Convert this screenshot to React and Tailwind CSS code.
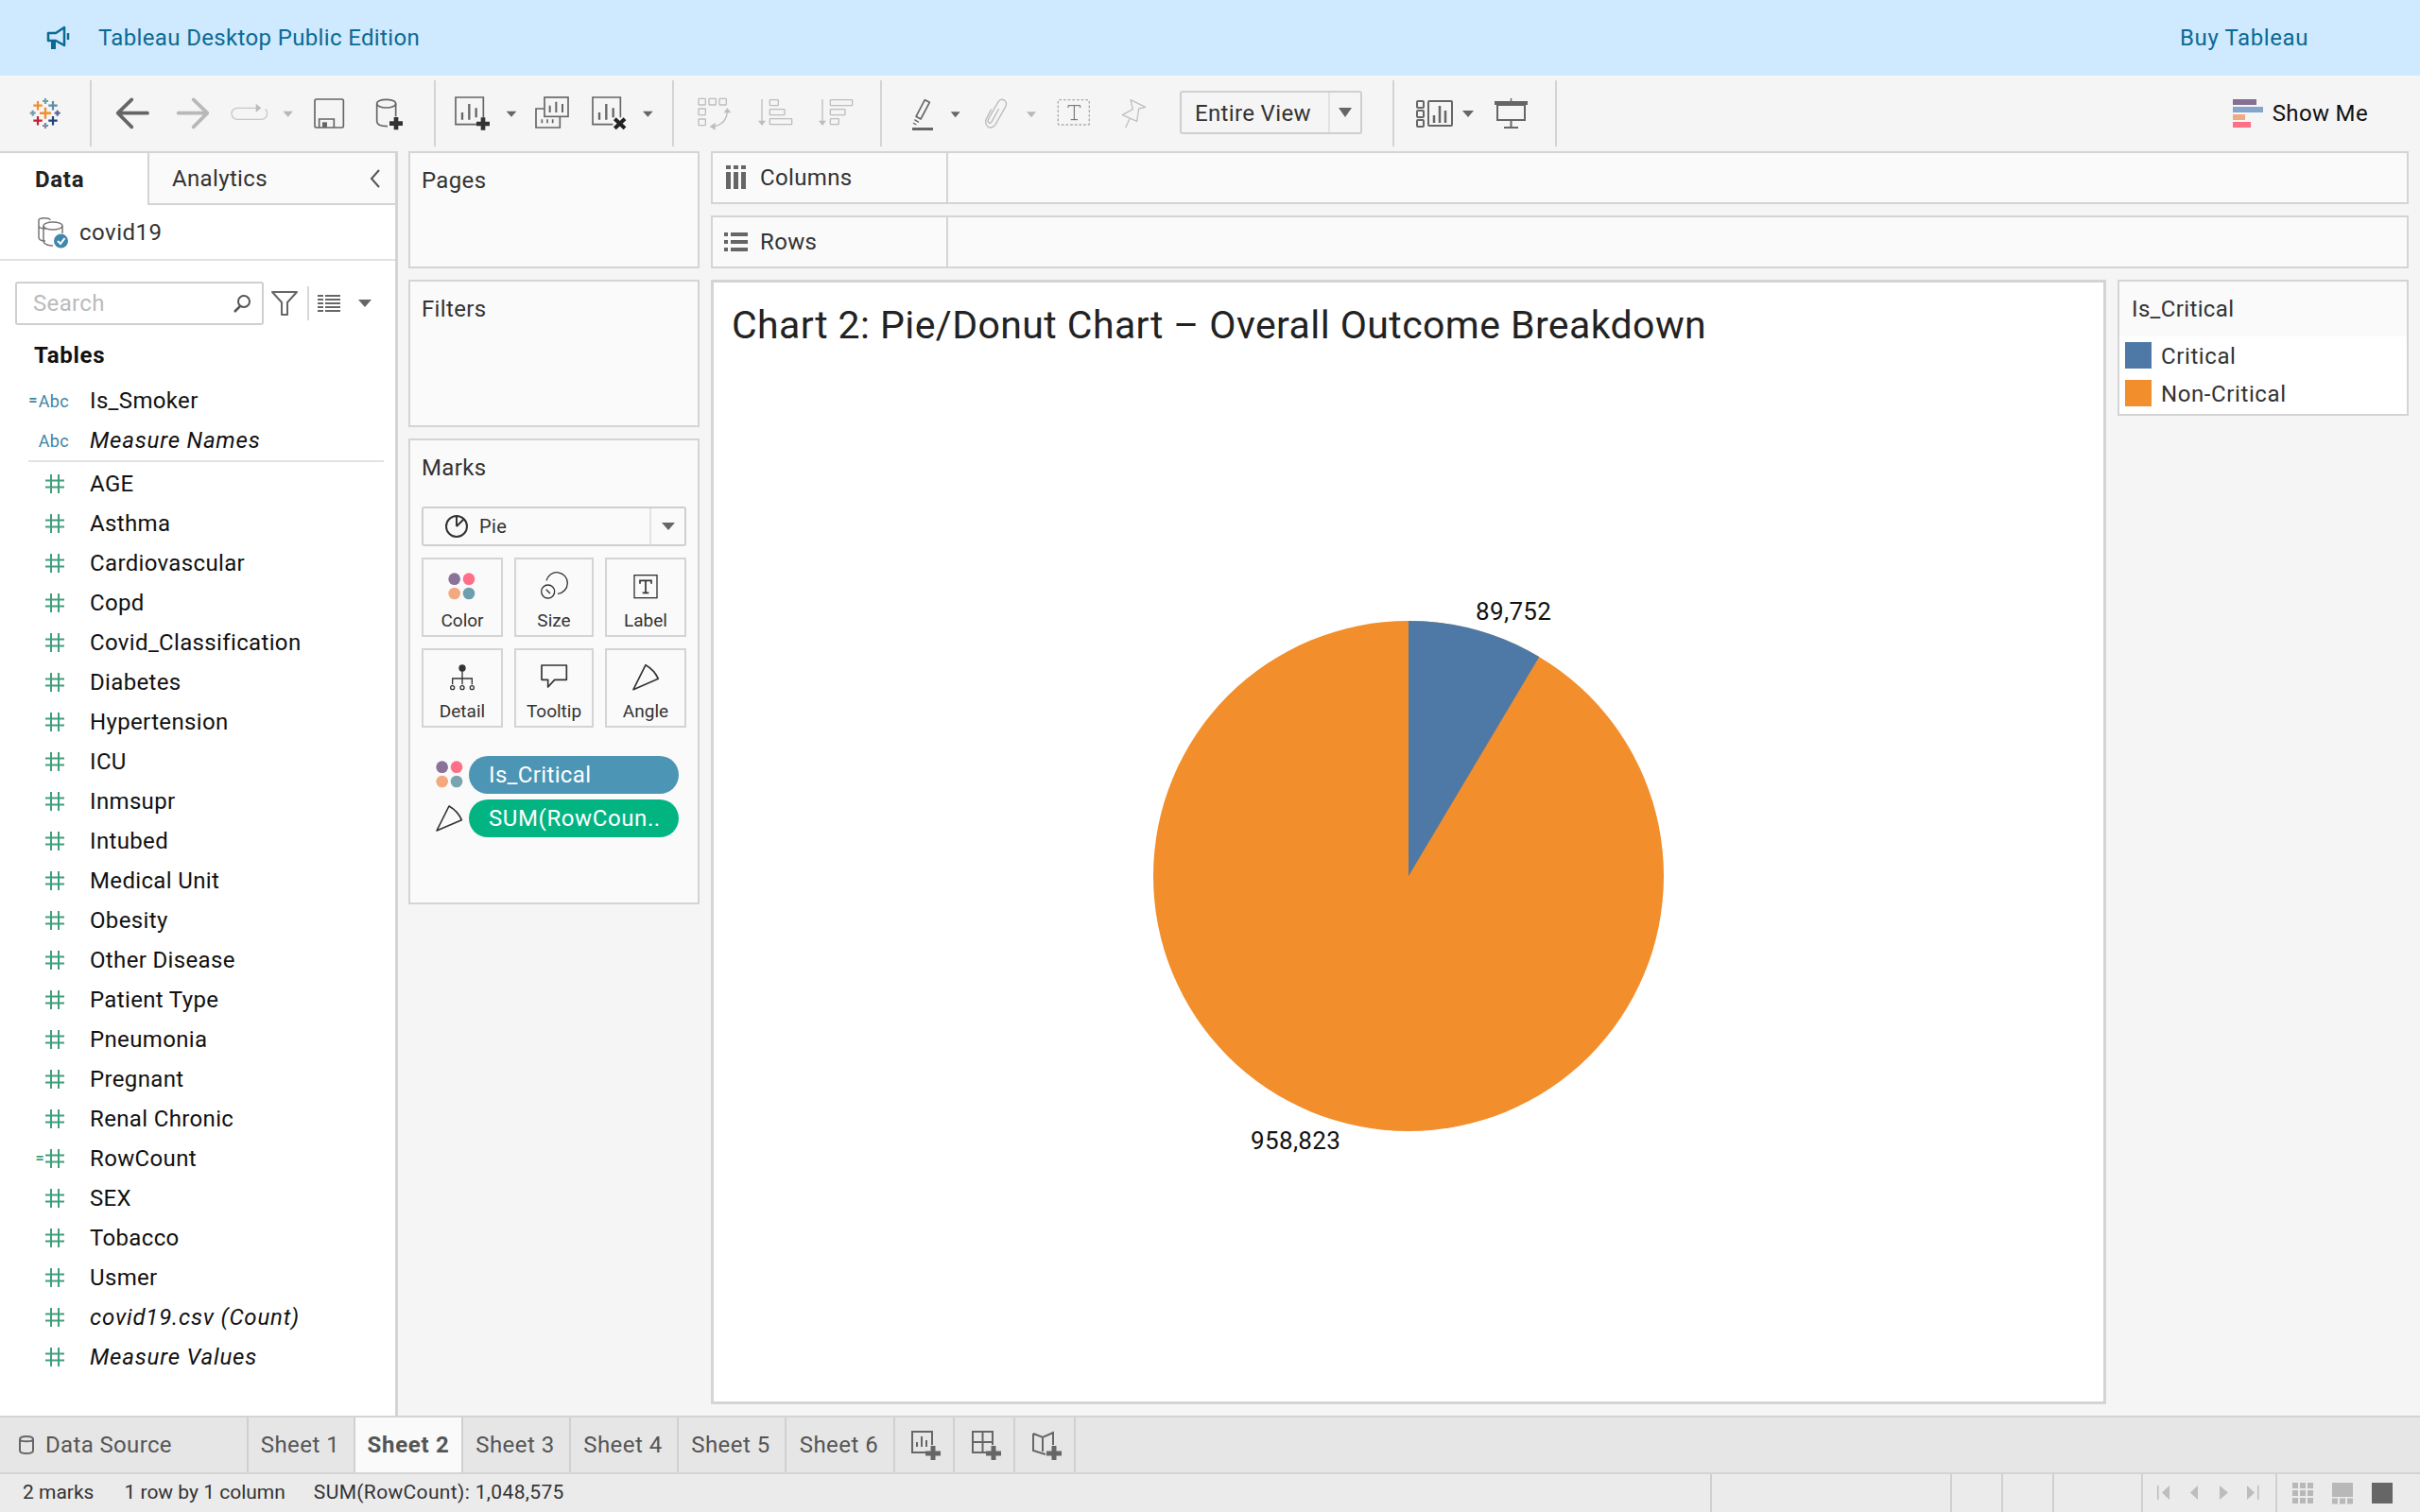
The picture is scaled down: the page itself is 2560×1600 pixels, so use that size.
import React from "react";

const fields = [
  "AGE", "Asthma", "Cardiovascular", "Copd", "Covid_Classification", "Diabetes", "Hypertension", "ICU",
  "Inmsupr", "Intubed", "Medical Unit", "Obesity", "Other Disease", "Patient Type", "Pneumonia", "Pregnant",
  "Renal Chronic", "RowCount", "SEX", "Tobacco", "Usmer",
];

// toolbar icons are drawn at 3x, viewBox height is always 180 => 60px
const Icon = ({ className, viewBox, children }) => (
  <svg className={"h-[60px] shrink-0 " + className} viewBox={viewBox} fill="none">
    {children}
  </svg>
);

const Tri = ({ className, viewBox, x, w, y = 68, h = 18, color = "#666" }) => (
  <Icon className={className} viewBox={viewBox}>
    <path d={`M${x} ${y}H${x + w}L${x + w / 2} ${y + h}Z`} fill={color} />
  </Icon>
);

const Sep = ({ className }) => <div className={"w-[2px] h-[70px] bg-[#d4d4d4] shrink-0 " + className} />;

const Cross = ({ x, y, a, t, c }) => (
  <path d={`M${x - a} ${y}H${x + a}M${x} ${y - a}V${y + a}`} stroke={c} strokeWidth={t} />
);

const Plus = ({ x, y, c = "#333" }) => (
  <path d={`M${x - 21} ${y}H${x + 21}M${x} ${y - 20}V${y + 20}`} stroke={c} strokeWidth="14" />
);

const Toolbar = () => (
  <div className="h-[80px] bg-[#f5f5f5] flex items-center shrink-0">
    <svg className="ml-[30px] w-[38px] h-[38px] shrink-0" viewBox="0 0 38 38" fill="none">
      <Cross x={18} y={18.7} a={6} t={2.4} c="#f28e2b" />
      <Cross x={10} y={10.7} a={4.7} t={2.2} c="#f28e2b" />
      <Cross x={26} y={10.7} a={4.7} t={2.2} c="#5b8fa3" />
      <Cross x={10} y={26.7} a={4.7} t={2.2} c="#c72035" />
      <Cross x={26} y={26.7} a={4.7} t={2.2} c="#1f447a" />
      <Cross x={18} y={6} a={3} t={2.2} c="#6f9fae" />
      <Cross x={4.7} y={18.7} a={3} t={2.2} c="#6f9fae" />
      <Cross x={30.7} y={18.7} a={3} t={2.2} c="#59659a" />
      <Cross x={18} y={32} a={3} t={2.2} c="#7b8bb0" />
    </svg>
    <Sep className="ml-[27px]" />

    <Icon className="ml-[23px] w-[40px]" viewBox="300 -15 120 180">
      <path d="M408 74H316M358 31L314 74L358 118" stroke="#666" strokeWidth="11" strokeLinecap="round" strokeLinejoin="round" />
    </Icon>
    <Icon className="ml-[25px] w-[38px]" viewBox="495 -15 114 180">
      <path d="M506 74H596M554 31L598 74L554 118" stroke="#b8b8b8" strokeWidth="11" strokeLinecap="round" strokeLinejoin="round" />
    </Icon>
    <Icon className="ml-[19px] w-[44px]" viewBox="666 -15 132 180">
      <path d="M755 58H693a18 18 0 0 0 0 36H770a18 18 0 0 0 18 -18q0 -10 -6 -14" stroke="#c8c8c8" strokeWidth="4" />
      <path d="M752 44L769 58L752 72Z" fill="#bbb" />
    </Icon>
    <Tri className="ml-[12px] w-[14px]" viewBox="834 -15 42 180" x={838} w={32} color="#b8b8b8" />
    <Icon className="ml-[18px] w-[36px]" viewBox="930 -15 108 180">
      <rect x="939" y="30" width="91" height="90" rx="5" stroke="#666" strokeWidth="5" />
      <path d="M953 120V93H1000V120" stroke="#666" strokeWidth="5" />
      <rect x="963" y="103" width="15" height="17" fill="#666" />
    </Icon>
    <Icon className="ml-[30px] w-[32px]" viewBox="1128 -15 96 180">
      <ellipse cx="1166" cy="44" rx="30" ry="13" stroke="#666" strokeWidth="5" />
      <path d="M1136 44V100Q1136 116 1170 116M1196 44V85" stroke="#666" strokeWidth="5" />
      <Plus x={1197} y={107} />
    </Icon>
    <Sep className="ml-[31px]" />

    <Icon className="ml-[19px] w-[39px]" viewBox="30 -15 117 180">
      <path d="M102 110H36V24H124V88" stroke="#666" strokeWidth="5" />
      <path d="M57 95V72M79 95V45M101 88V58" stroke="#666" strokeWidth="7" />
      <Plus x={123} y={108} />
    </Icon>
    <Tri className="ml-[16px] w-[12px]" viewBox="195 -15 36 180" x={197} w={32} />
    <Icon className="ml-[18px] w-[38px]" viewBox="285 -15 114 180">
      <rect x="318" y="24" width="75" height="61" stroke="#666" strokeWidth="5" />
      <path d="M335 72V50M355 72V38M375 72V45" stroke="#666" strokeWidth="6" />
      <path d="M316 60H291V120H367V86" stroke="#666" strokeWidth="5" />
      <path d="M310 106V94M327 106V94M344 106V94" stroke="#666" strokeWidth="5" />
    </Icon>
    <Icon className="ml-[22px] w-[39px]" viewBox="465 -15 117 180">
      <path d="M535 110H471V24H559V88" stroke="#666" strokeWidth="5" />
      <path d="M492 95V72M514 95V45M536 88V58" stroke="#666" strokeWidth="7" />
      <path d="M541 92L573 122M573 92L541 122" stroke="#222" strokeWidth="12" />
    </Icon>
    <Tri className="ml-[15px] w-[13px]" viewBox="627 -15 39 180" x={630} w={32} />
    <Sep className="ml-[19px]" />

    <Icon className="ml-[24px] w-[37px]" viewBox="801 -15 111 180">
      <g stroke="#bdbdbd" strokeWidth="4">
        <rect x="807" y="28" width="22" height="20" rx="2" />
        <rect x="840" y="28" width="22" height="20" rx="2" />
        <rect x="873" y="28" width="22" height="20" rx="2" />
        <rect x="807" y="60" width="22" height="20" rx="2" />
        <rect x="807" y="93" width="22" height="20" rx="2" />
        <path d="M898 70Q895 108 855 117" />
      </g>
      <path d="M887 73H910L898 58ZM860 104V128L842 117Z" fill="#bdbdbd" />
    </Icon>
    <Icon className="ml-[27px] w-[38px]" viewBox="993 -15 114 180">
      <g stroke="#bdbdbd" strokeWidth="4">
        <path d="M1008 30V100" />
        <rect x="1033" y="32" width="27" height="18" rx="2" />
        <rect x="1033" y="62" width="47" height="18" rx="2" />
        <rect x="1033" y="92" width="70" height="18" rx="2" />
      </g>
      <path d="M996 98H1020L1008 114Z" fill="#bdbdbd" />
    </Icon>
    <Icon className="ml-[26px] w-[38px]" viewBox="1185 -15 114 180">
      <g stroke="#bdbdbd" strokeWidth="4">
        <path d="M1200 30V100" />
        <rect x="1225" y="32" width="70" height="18" rx="2" />
        <rect x="1225" y="62" width="47" height="18" rx="2" />
        <rect x="1225" y="92" width="27" height="18" rx="2" />
      </g>
      <path d="M1188 98H1212L1200 114Z" fill="#bdbdbd" />
    </Icon>
    <Sep className="ml-[28px]" />

    <Icon className="ml-[31px] w-[24px]" viewBox="42 -15 72 180">
      <path d="M85 32L100 40L72 93L57 85Z" stroke="#666" strokeWidth="5" strokeLinejoin="round" />
      <path d="M52 95L66 103M48 105L58 111" stroke="#666" strokeWidth="4" />
      <rect x="45" y="120" width="66" height="9" fill="#666" />
    </Icon>
    <Tri className="ml-[17px] w-[12px]" viewBox="165 -15 36 180" x={167} w={30} y={70} />
    <Icon className="ml-[23px] w-[27px]" viewBox="270 -15 81 180">
      <path d="M320 60L298 100Q293 108 288 105Q283 101 287 92L318 38Q326 26 338 34Q348 42 340 56L308 112Q296 126 284 116Q274 106 280 92L296 62" stroke="#bbb" strokeWidth="4" />
    </Icon>
    <Tri className="ml-[18px] w-[12px]" viewBox="405 -15 36 180" x={408} w={30} y={70} color="#b8b8b8" />
    <Icon className="ml-[21px] w-[36px]" viewBox="504 -15 108 180">
      <rect x="508" y="32" width="99" height="79" rx="3" stroke="#aaa" strokeWidth="4" strokeDasharray="8 6" />
      <path d="M540 57V50H578V57M559 50V95M548 95H570" stroke="#666" strokeWidth="3" />
    </Icon>
    <Icon className="ml-[31px] w-[28px]" viewBox="705 -15 84 180">
      <path d="M738 32L785 55L764 60L758 100L712 80L745 62Z" stroke="#c0c0c0" strokeWidth="4" strokeLinejoin="round" />
      <path d="M735 92L722 120" stroke="#c0c0c0" strokeWidth="4" />
    </Icon>

    <div className="ml-[35px] w-[193px] h-[46px] -mt-[2px] border-2 border-[#cfcfcf] rounded-[3px] flex items-center shrink-0">
      <span className="w-[155px] pl-[14px] pt-[1px] text-[24px] text-[#333]">Entire View</span>
      <div className="h-full border-l-2 border-[#e2e2e2] flex-1 flex items-center justify-center">
        <div className="w-0 h-0 border-l-[7px] border-r-[7px] border-t-[10px] border-l-transparent border-r-transparent border-t-[#666]" />
      </div>
    </div>
    <Sep className="ml-[32px]" />

    <svg className="ml-[22px] w-[41px] h-[60px] shrink-0" viewBox="1497 90 41 60" fill="none">
      <g stroke="#666" strokeWidth="2">
        <rect x="1499" y="107" width="7" height="7" rx="1" />
        <rect x="1499" y="117" width="7" height="7" rx="1" />
        <rect x="1499" y="127" width="7" height="7" rx="1" />
        <rect x="1511" y="107" width="25" height="26" rx="1" />
      </g>
      <path d="M1517 130V122M1523 130V112M1529 130V117" stroke="#666" strokeWidth="2.5" />
    </svg>
    <div className="ml-[9px] w-0 h-0 border-l-[6px] border-r-[6px] border-t-[7px] border-l-transparent border-r-transparent border-t-[#666] shrink-0" />
    <svg className="ml-[21px] w-[37px] h-[60px] shrink-0" viewBox="1580 90 37 60" fill="none">
      <path d="M1598.500 104V107" stroke="#666" strokeWidth="1.500" />
      <rect x="1581" y="107" width="35" height="4" fill="#666" />
      <rect x="1584" y="111" width="29" height="16" stroke="#666" strokeWidth="2" />
      <path d="M1598.500 127V135M1591 135H1606" stroke="#666" strokeWidth="2" />
    </svg>
    <Sep className="ml-[28px]" />

    <div className="ml-auto mr-[55px] flex items-center gap-[10px]">
      <div className="flex flex-col gap-[2px] w-[32px]">
        <div className="h-[6px] w-[25px] bg-[#866f95]" />
        <div className="h-[6px] w-[32px] bg-[#85a5cb]" />
        <div className="h-[6px] w-[13px] bg-[#f2a97f]" />
        <div className="h-[6px] w-[19px] bg-[#ff7086]" />
      </div>
      <span className="text-[24px] text-[#111]">Show Me</span>
    </div>
  </div>
);

const Hash = () => (
  <svg className="w-[20px] h-[20px] shrink-0" viewBox="0 0 20 20" fill="none">
    <path d="M6 0V20M14 0V20M0 6.500H20M0 13.500H20" stroke="#3f9f7c" strokeWidth="2" />
  </svg>
);

const Row = ({ name, italic, calc }) => (
  <div className="h-[42px] flex items-center">
    <div className="w-[95px] pr-[27px] flex justify-end items-center shrink-0">
      {calc && <span className="text-[16px] font-bold text-[#3f9f7c] mr-[1px] leading-none">=</span>}
      <Hash />
    </div>
    <span className={"text-[24px] text-[#111] " + (italic ? "italic tracking-[0.8px]" : "")}>{name}</span>
  </div>
);

const AbcRow = ({ name, italic, calc }) => (
  <div className="h-[42px] flex items-center">
    <div className="w-[95px] pr-[22px] flex justify-end items-center shrink-0 text-[18px] text-[#3f84a5]">
      {calc && <span className="text-[16px] font-bold mr-[1px]">=</span>}Abc
    </div>
    <span className={"text-[24px] text-[#111] " + (italic ? "italic tracking-[0.8px]" : "")}>{name}</span>
  </div>
);

const LeftPanel = () => (
  <div className="w-[421px] shrink-0 bg-white border-r-[3px] border-[#d4d4d4] flex flex-col">
    <div className="h-[57px] flex border-t-2 border-[#d4d4d4]">
      <div className="w-[156px] pl-[37px] flex items-center font-bold text-[24px] text-[#222] tracking-[0.7px]">Data</div>
      <div className="flex-1 bg-[#fafafa] border-l-2 border-b-2 border-[#d4d4d4] pl-[24px] flex items-center justify-between pr-[15px]">
        <span className="text-[24px] text-[#333]">Analytics</span>
        <svg className="w-[12px] h-[20px]" viewBox="0 0 12 20" fill="none">
          <path d="M10 1L2 10L10 19" stroke="#555" strokeWidth="2" />
        </svg>
      </div>
    </div>
    <div className="h-[59px] border-b-2 border-[#e2e2e2] flex items-center pl-[39px]">
      <svg className="w-[33px] h-[34px] shrink-0" viewBox="0 0 33 34" fill="none">
        <g stroke="#777" strokeWidth="1.500">
          <path d="M2 4C2 1 14 1 14 4M2 4V22C2 25 6 26 9 26M2 10C2 13 8 13 10 13" />
          <ellipse cx="17" cy="10" rx="10" ry="4" />
          <path d="M7 10V26C7 30 14 31 17 31M27 10V18" />
        </g>
        <circle cx="25.500" cy="26" r="7.500" fill="#3f87ab" />
        <path d="M22 26L25 29L29.500 23" stroke="#fff" strokeWidth="2" />
      </svg>
      <span className="ml-[12px] text-[24px] text-[#333] tracking-[0.5px]">covid19</span>
    </div>
    <div className="mt-[22px] flex items-center h-[46px] pl-[16px]">
      <div className="w-[263px] h-[46px] border-2 border-[#cfcfcf] rounded-[3px] flex items-center justify-between pl-[17px] pr-[11px]">
        <span className="text-[24px] text-[#bbb]">Search</span>
        <svg className="w-[20px] h-[20px]" viewBox="0 0 20 20" fill="none">
          <circle cx="12" cy="8" r="6" stroke="#555" strokeWidth="2" />
          <path d="M8 13L2 19" stroke="#555" strokeWidth="2.500" />
        </svg>
      </div>
      <svg className="ml-[8px] w-[28px] h-[26px] shrink-0" viewBox="0 0 28 26" fill="none">
        <path d="M1 1H27L17 12V25H11V12Z" stroke="#666" strokeWidth="2" strokeLinejoin="round" />
      </svg>
      <div className="ml-[10px] w-[2px] h-[36px] bg-[#d8d8d8]" />
      <svg className="ml-[9px] w-[24px] h-[18px] shrink-0" viewBox="0 0 24 18" fill="#666">
        <path d="M0 0H6V2H0ZM8 0H24V2H8ZM0 4H6V6H0ZM8 4H24V6H8ZM0 8H6V10H0ZM8 8H24V10H8ZM0 12H6V14H0ZM8 12H24V14H8ZM0 16H6V18H0ZM8 16H24V18H8Z" />
      </svg>
      <div className="ml-[19px] w-0 h-0 border-l-[7px] border-r-[7px] border-t-[8px] border-l-transparent border-r-transparent border-t-[#666]" />
    </div>
    <div className="mt-[18px] h-[28px] pl-[36px] flex items-center font-bold text-[24px] text-[#111] tracking-[0.7px]">Tables</div>
    <div className="mt-[13px]">
      <AbcRow name="Is_Smoker" calc />
      <AbcRow name="Measure Names" italic />
      <div className="ml-[30px] w-[376px] h-[2px] bg-[#e2e2e2]" />
      <div className="mt-[2px]">
        {fields.map((f) => (
          <Row key={f} name={f} calc={f === "RowCount"} />
        ))}
        <Row name="covid19.csv (Count)" italic />
        <Row name="Measure Values" italic />
      </div>
    </div>
  </div>
);

const Dots = ({ className = "", c4 = "#6f9fae" }) => (
  <svg className={"w-[32px] h-[32px] shrink-0 " + className} viewBox="128 434 96 96">
    <circle cx="151" cy="457" r="19" fill="#8a7299" />
    <circle cx="197" cy="457" r="19" fill="#ff7086" />
    <circle cx="151" cy="503" r="19" fill="#f2a97f" />
    <circle cx="197" cy="503" r="19" fill={c4} />
  </svg>
);

const Card = ({ w, label, children }) => (
  <div className={"h-[84px] border-2 border-[#d4d4d4] flex flex-col items-center pt-[13px] shrink-0 " + w}>
    <div className="h-[32px] flex items-center justify-center">{children}</div>
    <span className="mt-[9px] text-[19px] leading-[22px] text-[#333] tracking-normal">{label}</span>
  </div>
);

const Angle = ({ className = "" }) => (
  <svg className={"w-[32px] h-[32px] shrink-0 " + className} viewBox="708 720 96 96" fill="none">
    <path d="M717 806L756 728Q784 744 796 772Z" stroke="#333" strokeWidth="5" strokeLinejoin="round" />
  </svg>
);

const Shelf = ({ icon, label }) => (
  <div className="h-[56px] flex border-2 border-[#d4d4d4] bg-[#fafafa]">
    <div className="w-[249px] shrink-0 border-r-2 border-[#d4d4d4] flex items-center pl-[12px]">
      <div className="w-[25px] flex justify-center">{icon}</div>
      <span className="ml-[13px] text-[24px] text-[#333]">{label}</span>
    </div>
  </div>
);

const MiddlePanel = () => (
  <div className="w-[308px] ml-[11px] mt-0 mb-[12px] flex flex-col gap-[12px] shrink-0">
    <div className="h-[124px] border-2 border-[#d4d4d4] bg-[#fafafa] pl-[12px] pt-[14px] text-[24px] leading-[30px] text-[#333]">Pages</div>
    <div className="h-[156px] border-2 border-[#d4d4d4] bg-[#fafafa] pl-[12px] pt-[14px] text-[24px] leading-[30px] text-[#333]">Filters</div>
    <div className="h-[493px] border-2 border-[#d4d4d4] bg-[#fafafa] px-[12px] pt-[14px]">
      <div className="text-[24px] leading-[30px] text-[#333]">Marks</div>
      <div className="mt-[26px] h-[42px] w-[280px] border-2 border-[#cfcfcf] rounded-[3px] flex items-center">
        <div className="w-[241px] h-full flex items-center pl-[22px] border-r-2 border-[#e2e2e2]">
          <svg className="w-[26px] h-[26px] shrink-0" viewBox="0 0 26 26" fill="none">
            <circle cx="13" cy="13" r="11" stroke="#333" strokeWidth="2" />
            <path d="M13 13L21 5M13 13V2" stroke="#333" strokeWidth="2" />
          </svg>
          <span className="ml-[11px] text-[20px] text-[#333]">Pie</span>
        </div>
        <div className="flex-1 flex justify-center">
          <div className="w-0 h-0 border-l-[7px] border-r-[7px] border-t-[8px] border-l-transparent border-r-transparent border-t-[#666]" />
        </div>
      </div>
      <div className="mt-[12px] flex gap-[12px]">
        <Card w="w-[86px]" label="Color"><Dots /></Card>
        <Card w="w-[84px]" label="Size">
          <svg className="w-[32px] h-[32px]" viewBox="420 434 96 96" fill="none">
            <path d="M444 462A34 34 0 1 1 480 504" stroke="#333" strokeWidth="4" />
            <circle cx="449" cy="497" r="21" stroke="#333" strokeWidth="4" />
            <path d="M443 490L456 503" stroke="#333" strokeWidth="4" />
          </svg>
        </Card>
        <Card w="w-[86px]" label="Label">
          <svg className="w-[32px] h-[32px]" viewBox="705 430 96 96" fill="none">
            <rect x="717" y="441" width="72" height="72" stroke="#333" strokeWidth="4" />
            <path d="M735 468V458H771V468M753 458V497M743 497H763" stroke="#333" strokeWidth="5" />
          </svg>
        </Card>
      </div>
      <div className="mt-[12px] flex gap-[12px]">
        <Card w="w-[86px]" label="Detail">
          <svg className="w-[32px] h-[32px]" viewBox="123 720 96 96" fill="none">
            <circle cx="171" cy="738" r="11" fill="#333" />
            <path d="M171 745V790M140 790V771H202V790" stroke="#333" strokeWidth="4" />
            <circle cx="140" cy="800" r="6" stroke="#333" strokeWidth="4" />
            <circle cx="171" cy="800" r="6" stroke="#333" strokeWidth="4" />
            <circle cx="202" cy="800" r="6" stroke="#333" strokeWidth="4" />
          </svg>
        </Card>
        <Card w="w-[84px]" label="Tooltip">
          <svg className="w-[32px] h-[32px]" viewBox="420 720 96 96" fill="none">
            <path d="M429 729H508V775H470L449 798V775H429Z" stroke="#333" strokeWidth="5" strokeLinejoin="round" />
          </svg>
        </Card>
        <Card w="w-[86px]" label="Angle"><Angle /></Card>
      </div>
      <div className="mt-[30px] flex items-center pl-[14px] h-[40px]">
        <Dots c4="#7ba3b0" />
        <div className="ml-[4px] w-[222px] h-[40px] rounded-full bg-[#4c95b5] pl-[21px] flex items-center text-[24px] text-white">Is_Critical</div>
      </div>
      <div className="mt-[6px] flex items-center pl-[14px] h-[40px]">
        <svg className="w-[32px] h-[32px] shrink-0" viewBox="86 1170 96 96" fill="none">
          <path d="M92 1257L131 1179Q159 1195 171 1223Z" stroke="#333" strokeWidth="5" strokeLinejoin="round" />
        </svg>
        <div className="ml-[4px] w-[222px] h-[40px] rounded-full bg-[#03b483] pl-[21px] flex items-center text-[24px] text-white tracking-[0.6px]">SUM(RowCoun..</div>
      </div>
    </div>
  </div>
);

const PieChart = () => (
  <svg className="w-[640px] h-[640px]" viewBox="-320 -320 640 640">
    <circle cx="0" cy="0" r="270" fill="#f28e2b" />
    <path d="M0 0V-270A270 270 0 0 1 138.300 -231.900Z" fill="#4e79a7" />
    <text x="71" y="-271" fontSize="26" fill="#111">89,752</text>
    <text x="-167" y="289" fontSize="26" fill="#111">958,823</text>
  </svg>
);

const ContentArea = () => (
  <div className="flex-1 ml-[12px] mr-[12px] mb-[12px] flex flex-col gap-[12px] min-w-0">
    <Shelf
      label="Columns"
      icon={
        <svg className="w-[22px] h-[26px]" viewBox="0 0 22 26" fill="#666">
          <path d="M0 0H5V4H0ZM8 0H13V4H8ZM16 0H21V4H16ZM0 7H5V25H0ZM8 7H13V25H8ZM16 7H21V25H16Z" />
        </svg>
      }
    />
    <Shelf
      label="Rows"
      icon={
        <svg className="w-[25px] h-[20px]" viewBox="0 0 25 20" fill="#666">
          <path d="M0 0H4V4H0ZM7 0H25V4H7ZM0 8H4V12H0ZM7 8H25V12H7ZM0 16H4V20H0ZM7 16H25V20H7Z" />
        </svg>
      }
    />
    <div className="flex-1 flex gap-[12px] min-h-0">
      <div className="flex-1 bg-white border-[3px] border-[#d4d4d4] flex flex-col min-w-0">
        <div className="h-[71px] pb-[2px] pl-[19px] flex items-end text-[41px] leading-[48px] text-[#222] tracking-[0.42px]">
          Chart 2: Pie/Donut Chart – Overall Outcome Breakdown
        </div>
        <div className="flex-1 flex items-center justify-center min-h-0">
          <PieChart />
        </div>
      </div>
      <div className="w-[308px] shrink-0 self-start h-[144px] border-2 border-[#d4d4d4] bg-white flex flex-col">
        <div className="h-[58px] bg-[#fafafa] pl-[13px] flex items-center text-[24px] text-[#333]">Is_Critical</div>
        <div className="mt-[6px] pl-[6px] flex items-center gap-[10px] h-[28px]">
          <div className="w-[28px] h-[28px] bg-[#4e79a7]" />
          <span className="pt-[2px] text-[24px] text-[#333] tracking-[0.6px]">Critical</span>
        </div>
        <div className="mt-[12px] pl-[6px] flex items-center gap-[10px] h-[28px]">
          <div className="w-[28px] h-[28px] bg-[#f28e2b]" />
          <span className="pt-[2px] text-[24px] text-[#333] tracking-[0.6px]">Non-Critical</span>
        </div>
      </div>
    </div>
  </div>
);

const Tab = ({ w, active, children }) => (
  <div
    className={
      "h-full flex items-center justify-center border-r-2 border-[#d0d0d0] text-[24px] text-[#555] shrink-0 " +
      w +
      (active ? " bg-[#fafafa] font-bold tracking-[0.7px]" : " pr-[2px] tracking-[0.5px]")
    }
  >
    {children}
  </div>
);

const TabBar = () => (
  <div className="h-[62px] bg-[#e6e6e6] border-t-2 border-b-2 border-[#d4d4d4] flex items-stretch shrink-0">
    <div className="w-[263px] flex items-center pl-[19px] border-r-2 border-[#d0d0d0] shrink-0">
      <svg className="w-[18px] h-[22px]" viewBox="0 0 18 22" fill="none">
        <path d="M2 5C2 1 16 1 16 5V17C16 21 2 21 2 17ZM2 5C2 8 16 8 16 5" stroke="#666" strokeWidth="2" />
      </svg>
      <span className="ml-[11px] text-[24px] text-[#555]">Data Source</span>
    </div>
    <Tab w="w-[113px]">Sheet 1</Tab>
    <Tab w="w-[114px]" active>Sheet 2</Tab>
    <Tab w="w-[114px]">Sheet 3</Tab>
    <Tab w="w-[114px]">Sheet 4</Tab>
    <Tab w="w-[114px]">Sheet 5</Tab>
    <Tab w="w-[115px]">Sheet 6</Tab>
    <Tab w="w-[63px]">
      <svg className="ml-[6px] w-[31px] h-[31px]" viewBox="0 0 31 31" fill="none">
        <path d="M17 23H1V1H22V15" stroke="#666" strokeWidth="2" />
        <path d="M6 17V12M11 17V6M16 17V10" stroke="#666" strokeWidth="2" />
        <path d="M15 24H31M23 16V31" stroke="#666" strokeWidth="5" />
      </svg>
    </Tab>
    <Tab w="w-[64px]">
      <svg className="ml-[6px] w-[31px] h-[31px]" viewBox="0 0 31 31" fill="none">
        <path d="M17 23H1V1H22V15M11.500 1V23M1 12H22" stroke="#666" strokeWidth="2" />
        <path d="M15 24H31M23 16V31" stroke="#666" strokeWidth="5" />
      </svg>
    </Tab>
    <Tab w="w-[64px]">
      <svg className="ml-[6px] w-[31px] h-[31px]" viewBox="0 0 31 31" fill="none">
        <path d="M1 3L11 7L22 2V15M1 3V21L14 25M11 7V22" stroke="#666" strokeWidth="2" />
        <path d="M15 24H31M23 16V31" stroke="#666" strokeWidth="5" />
      </svg>
    </Tab>
  </div>
);

const StatusCell = ({ w, children }) => (
  <div className={"h-full border-l-2 border-[#d0d0d0] shrink-0 flex items-center " + w}>{children}</div>
);

const StatusBar = () => (
  <div className="h-[40px] bg-[#ebebeb] flex items-center shrink-0 text-[21px] text-[#333]">
    <div className="flex-1 flex items-center pl-[24px]">
      <span className="tracking-normal">2 marks</span>
      <span className="ml-[32px] tracking-normal">1 row by 1 column</span>
      <span className="ml-[30px]">SUM(RowCount): 1,048,575</span>
    </div>
    <StatusCell w="w-[254px]" />
    <StatusCell w="w-[54px]" />
    <StatusCell w="w-[54px]" />
    <StatusCell w="w-[94px]" />
    <StatusCell w="w-[142px]">
      <svg className="ml-[15px] w-[110px] h-[16px]" viewBox="2282 1572 110 16">
        <path d="M2282 1572h1.500v15h-1.500ZM2295 1572v15l-8 -7.500ZM2325 1572v15l-8 -7.500ZM2348 1572v15l9 -7.500ZM2377 1572v15l8 -7.500ZM2388 1572h1.500v15h-1.500Z" fill="#bdbdbd" />
      </svg>
    </StatusCell>
    <StatusCell w="w-[153px]">
      <svg className="ml-[16px] w-[108px] h-[24px]" viewBox="2425 1568 108 24">
        <path d="M2425 1569h6v6h-6ZM2433 1569h6v6h-6ZM2441 1569h6v6h-6ZM2425 1577h6v6h-6ZM2433 1577h6v6h-6ZM2441 1577h6v6h-6ZM2425 1585h6v6h-6ZM2433 1585h6v6h-6ZM2441 1585h6v6h-6Z" fill="#b8b8b8" />
        <path d="M2467 1569h22v15h-22ZM2467 1585.500h6v6h-6ZM2475 1585.500h6v6h-6ZM2483 1585.500h6v6h-6Z" fill="#b8b8b8" />
        <rect x="2509" y="1569" width="22" height="22" fill="#666" />
      </svg>
    </StatusCell>
  </div>
);

export default function App() {
  return (
    <div className="w-[2560px] h-[1600px] flex flex-col bg-[#f5f5f5] overflow-hidden font-['Roboto',Arial,sans-serif] tracking-[0.35px]">
      <div className="h-[80px] bg-[#cfe9fe] flex items-center shrink-0 text-[24px] text-[#0b6a94]">
        <svg className="ml-[49px] w-[26px] h-[26px] shrink-0" viewBox="0 0 26 26" fill="none">
          <path d="M2 8H10L19 2V21L10 16H2Z" stroke="#0b6a94" strokeWidth="2.500" strokeLinejoin="round" />
          <path d="M5 16H10V25H5Z" fill="#0b6a94" />
          <path d="M23 8V15" stroke="#0b6a94" strokeWidth="2.500" />
        </svg>
        <span className="ml-[29px]">Tableau Desktop Public Edition</span>
        <span className="ml-auto mr-[118px] tracking-[0.6px]">Buy Tableau</span>
      </div>
      <Toolbar />
      <div className="flex-1 flex min-h-0">
        <LeftPanel />
        <MiddlePanel />
        <ContentArea />
      </div>
      <TabBar />
      <StatusBar />
    </div>
  );
}
